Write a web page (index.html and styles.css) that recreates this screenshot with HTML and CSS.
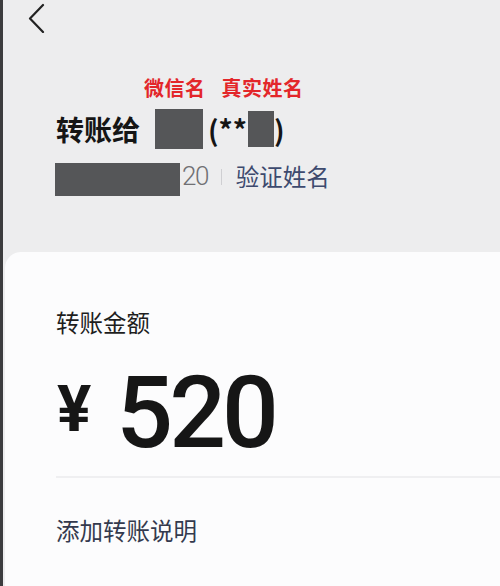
FILE: index.html
```html
<!DOCTYPE html>
<html lang="zh">
<head>
<meta charset="utf-8">
<link rel="stylesheet" href="styles.css">
</head>
<body>
<div class="page">
  <div class="header">
    <svg class="back" width="20" height="30" viewBox="0 0 20 30">
      <path d="M16 2 L3 15.5 L16 29" fill="none" stroke="#222" stroke-width="2.2" stroke-linecap="round" stroke-linejoin="round"/>
    </svg>
    <div class="labels">
      <span class="lab lab1">微信名</span>
      <span class="lab lab2">真实姓名</span>
    </div>
    <div class="title">
      <span class="t-text">转账给</span>
      <span class="mask mask-name"></span>
      <span class="t-text t-paren">(**</span>
      <span class="mask mask-real"></span>
      <span class="t-text">)</span>
    </div>
    <div class="sub">
      <span class="mask mask-phone"></span>
      <span class="phone-tail">20</span>
      <span class="sep"></span>
      <span class="verify">验证姓名</span>
    </div>
  </div>
  <div class="card">
    <div class="amount-label">转账金额</div>
    <div class="amount">
      <span class="yen">¥</span>
      <span class="num">520</span>
    </div>
    <div class="divider"></div>
    <div class="note">添加转账说明</div>
  </div>
</div>
</body>
</html>
```
FILE: styles.css
```css
* { box-sizing: border-box; }
html, body { margin: 0; padding: 0; }
body {
  width: 500px;
  height: 586px;
  overflow: hidden;
  background: #ededee;
  font-family: "Noto Sans CJK SC", "Noto Sans", sans-serif;
}
.page {
  width: 500px;
  height: 586px;
  display: flex;
  flex-direction: column;
  border-left: 3px solid #3c3c3e;
}
.header {
  height: 252px;
  padding-left: 53px;
  display: flex;
  flex-direction: column;
}
.back {
  display: block;
  margin-top: 3px;
  margin-left: -29px;
}
.labels {
  display: flex;
  margin-top: 43px;
  height: 24px;
  line-height: 24px;
  padding-left: 88px;
}
.lab {
  font-size: 20px;
  font-weight: 700;
  color: #e3262a;
  letter-spacing: 0.5px;
}
.lab2 { margin-left: 16px; }
.title {
  display: flex;
  align-items: center;
  height: 40px;
  margin-top: 9px;
  line-height: 40px;
}
.t-text {
  font-size: 28px;
  font-weight: 700;
  color: #151515;
}
.mask { display: block; background: #555658; }
.mask-name { width: 48px; height: 40px; margin-left: 15px; }
.t-paren { margin-left: 5px; }
.mask-real { width: 26px; height: 36px; margin-left: 1px; }
.sub {
  display: flex;
  align-items: center;
  height: 34px;
  margin-top: 13px;
}
.mask-phone { width: 125px; height: 33px; margin-left: -1px; }
.phone-tail {
  font-family: "Roboto", sans-serif;
  font-weight: 300;
  font-size: 26px;
  letter-spacing: -1.5px;
  color: #707073;
  margin-left: 2px;
  margin-bottom: 6px;
}
.sep {
  display: block;
  width: 1px;
  height: 16px;
  background: #cfcfd2;
  margin: 0 14px 5px 13px;
}
.verify {
  font-size: 23.5px;
  color: #3d4a6e;
  margin-bottom: 6px;
}
.card {
  flex: 1;
  margin-left: 2px;
  background: #fcfcfd;
  border-top-left-radius: 16px;
  padding-left: 51px;
  display: flex;
  flex-direction: column;
}
.amount-label {
  margin-top: 54px;
  height: 32px;
  line-height: 32px;
  font-size: 23.5px;
  color: #1e1e1e;
}
.amount {
  display: flex;
  align-items: flex-end;
  height: 120px;
  margin-top: 12px;
}
.yen {
  font-family: "Roboto", sans-serif;
  font-size: 64px;
  font-weight: 700;
  line-height: 64px;
  color: #161616;
  margin-left: 1px;
  margin-bottom: 28px;
}
.num {
  font-family: "Roboto", sans-serif;
  font-size: 100px;
  font-weight: 500;
  line-height: 100px;
  color: #161616;
  letter-spacing: -4px;
  margin-left: 25px;
  margin-bottom: 7px;
}
.divider {
  height: 2px;
  background: #efeff1;
  margin-top: 6px;
}
.note {
  margin-top: 36px;
  line-height: 32px;
  font-size: 23.5px;
  color: #343a4e;
}
```
